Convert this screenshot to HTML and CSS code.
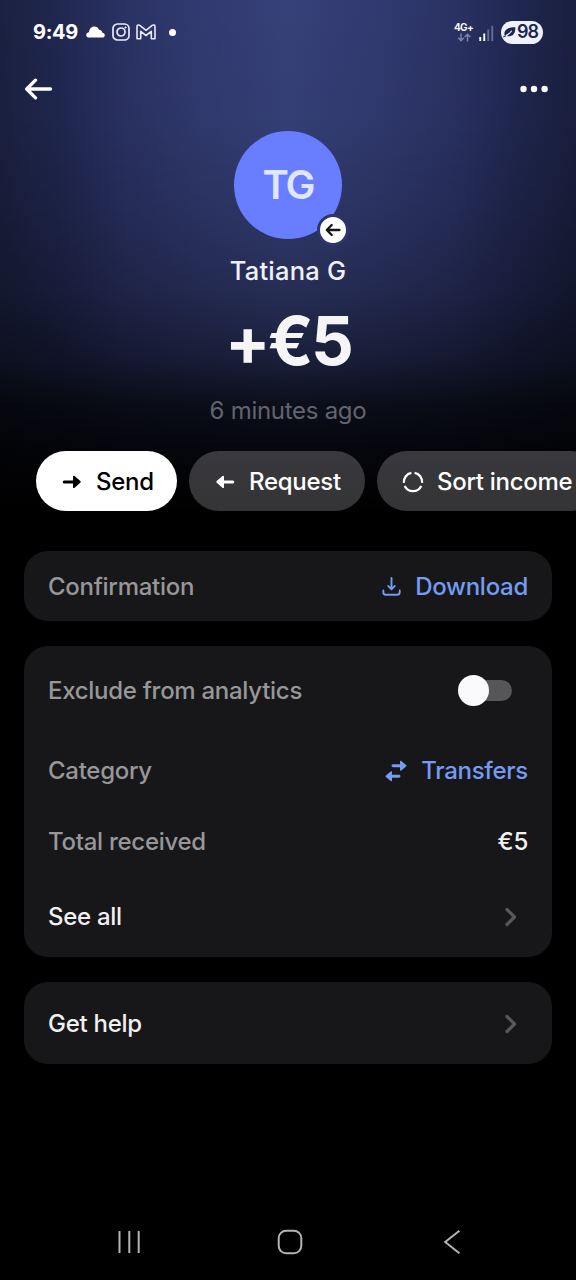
FILE: index.html
```html
<!DOCTYPE html>
<html lang="en">
<head>
<meta charset="utf-8">
<title>Transaction details</title>
<link rel="stylesheet" href="styles.css">
</head>
<body>
<div class="screen">
  <div class="status">
    <div class="status-left">
      <span class="clock">9:49</span>
      <svg class="cloud" width="19" height="12" viewBox="0 0 19 12"><path d="M3.2 11.6C1.3 11.6.2 10.5.2 9c0-1.700 1.300-2.700 2.800-2.800C3.300 2.800 5.500.6 8.200.6c2.300 0 4 1.200 4.800 3.200 2 .1 3.100 1.300 3.300 3 1.500.1 2.500 1.100 2.500 2.400 0 1.500-1.100 2.400-2.700 2.400z" fill="#fff"/></svg>
      <svg class="insta" width="18" height="18" viewBox="0 0 18 18" fill="none" stroke="#e6eaff" stroke-width="1.700"><rect x="1" y="1" width="16" height="16" rx="4.500"/><circle cx="9" cy="9" r="4"/><circle cx="13.500" cy="4.500" r=".8" fill="#e6eaff" stroke-width=".6"/></svg>
      <svg class="gmail" width="20" height="16" viewBox="0 0 20 16" fill="none" stroke="#e6eaff" stroke-width="1.600" stroke-linejoin="round"><path d="M1 14.800V2.600C1 1 2.600.5 3.800 1.400L10 6.300l6.200-4.900C17.400.5 19 1 19 2.600v12.200h-3.700V7.300L10 11.500 4.700 7.300v7.500z"/></svg>
      <span class="dot"></span>
    </div>
    <div class="status-right">
      <div class="network">
        <span class="network-label">4G+</span>
        <svg width="14" height="9" viewBox="0 0 14 9" fill="none" stroke="#7a80a8" stroke-width="1.500"><path d="M4 .5v7M1.200 4.800 4 7.600l2.800-2.800M10.500 8.500V1.300M7.700 4l2.800-2.800L13.300 4"/></svg>
      </div>
      <svg class="signal" width="15" height="16" viewBox="0 0 15 16"><path d="M.3 12h1.900v4H.3z" fill="#fff"/><path d="M4.300 8.500h1.900V16H4.300z" fill="#fff"/><path d="M8.300 4.500h1.900V16H8.300zM12.300 1h1.900v15h-1.900z" fill="#646b97"/></svg>
      <div class="battery">
        <svg width="13" height="12" viewBox="0 0 13 12"><path d="M1.500 9.500C.7 5 3.500 1.200 12.300 1.300c.3 5.700-2.300 9.200-7.200 9-1.100 0-2-.3-2.700-.8" fill="#1d2550"/><path d="M.3 10.800C3.500 9.800 6.500 8.200 8.700 4.800" fill="none" stroke="#eef1ff" stroke-width="1.100"/><path d="M.2 11 3 9.700" stroke="#1d2550" stroke-width="1.200"/></svg>
        <span>98</span>
      </div>
    </div>
  </div>

  <div class="toolbar">
    <svg width="28" height="22" viewBox="0 0 28 22" fill="none" stroke="#fff" stroke-width="3.300" stroke-linecap="round" stroke-linejoin="round"><path d="M25.500 11H3M10.500 2.200 1.700 11l8.800 8.800"/></svg>
    <svg width="28" height="8" viewBox="0 0 28 8" fill="#fff"><circle cx="3.500" cy="4" r="3.200"/><circle cx="14" cy="4" r="3.200"/><circle cx="24.600" cy="4" r="3.200"/></svg>
  </div>

  <div class="hero">
    <div class="avatar">
      <span>TG</span>
      <div class="badge"><svg width="16" height="14" viewBox="0 0 16 14" fill="none" stroke="#151515" stroke-width="2.300" stroke-linecap="round" stroke-linejoin="round"><path d="M14.500 7H2M6.700 2 1.800 7l4.900 5"/></svg></div>
    </div>
    <div class="name">Tatiana G</div>
    <div class="amount">+€5</div>
    <div class="time">6 minutes ago</div>
  </div>

  <div class="actions">
    <div class="pill pill-primary">
      <svg width="20" height="14" viewBox="0 0 20 14"><path d="M2.200 7H12" stroke="#000" stroke-width="3" stroke-linecap="round"/><path d="M11 1.700c0-1 .9-1.200 1.600-.6l5.700 5c.6.5.6 1.200 0 1.700l-5.700 5c-.7.600-1.600.3-1.600-.6z"/></svg>
      <span>Send</span>
    </div>
    <div class="pill pill-request">
      <svg width="20" height="14" viewBox="0 0 20 14" fill="#fff"><path d="M8 7h9.800" stroke="#fff" stroke-width="3" stroke-linecap="round"/><path d="M9 1.700c0-1-.9-1.200-1.600-.6l-5.700 5c-.6.5-.6 1.200 0 1.700l5.700 5c.7.600 1.600.3 1.600-.6z"/></svg>
      <span>Request</span>
    </div>
    <div class="pill pill-sort">
      <svg width="22" height="22" viewBox="0 0 22 22" fill="none" stroke="#fff" stroke-width="2.300"><path d="M12.600 1.940A9.200 9.200 0 0 1 20.150 11.960M19.270 15.030A9.200 9.200 0 0 1 2.730 15.030M1.850 11.960A9.200 9.200 0 0 1 9.400 1.940"/></svg>
      <span>Sort income</span>
    </div>
  </div>

  <div class="card card-confirm">
    <div class="row">
      <span class="label">Confirmation</span>
      <span class="link"><svg class="download" width="19" height="19" viewBox="0 0 19 19" fill="none" stroke="#769bf3" stroke-width="1.900" stroke-linecap="round" stroke-linejoin="round"><path d="M9.500 1v11M6.200 8.900l3.300 3.400 3.300-3.400M1.300 13.500v1.800c0 1.400.9 2.400 2.400 2.400h11.600c1.500 0 2.400-1 2.400-2.400v-1.800"/></svg><span>Download</span></span>
    </div>
  </div>

  <div class="card card-details">
    <div class="row row-exclude">
      <span class="label">Exclude from analytics</span>
      <div class="switch"><span class="knob"></span></div>
    </div>
    <div class="row row-category">
      <span class="label">Category</span>
      <span class="link"><svg width="22" height="22" viewBox="0 0 22 22" fill="#769bf3"><path d="M8 5.800h8M14 16.200H6" stroke="#769bf3" stroke-width="2.900" stroke-linecap="round"/><path d="M15 1.500c0-.8.700-1 1.300-.5l4.800 4.100c.5.400.5 1 0 1.400l-4.800 4.100c-.6.500-1.300.3-1.300-.5zM7 11.900c0-.8-.7-1-1.300-.5L.9 15.500c-.5.400-.5 1 0 1.400L5.700 21c.6.500 1.300.3 1.300-.5z"/></svg><span>Transfers</span></span>
    </div>
    <div class="row row-total">
      <span class="label">Total received</span>
      <span class="value">€5</span>
    </div>
    <div class="row row-all">
      <span class="strong">See all</span>
      <svg class="chevron" width="12" height="20" viewBox="0 0 12 20"><path d="m2 2.500 7.500 7.500L2 17.500" fill="none" stroke="#58585a" stroke-width="3.200" stroke-linecap="round" stroke-linejoin="round"/></svg>
    </div>
  </div>

  <div class="card card-help">
    <div class="row">
      <span class="strong">Get help</span>
      <svg class="chevron" width="12" height="20" viewBox="0 0 12 20"><path d="m2 2.500 7.500 7.500L2 17.500" fill="none" stroke="#58585a" stroke-width="3.200" stroke-linecap="round" stroke-linejoin="round"/></svg>
    </div>
  </div>

  <div class="navbar">
    <svg width="24" height="24" viewBox="0 0 24 24" stroke="#b4b4b4" stroke-width="2"><path d="M2.500 1v22M12.300 1v22M21.700 1v22"/></svg>
    <svg class="home" width="26" height="26" viewBox="0 0 26 26" fill="none" stroke="#b4b4b4" stroke-width="2"><rect x="1.700" y="1.700" width="22.600" height="22.600" rx="7.500"/></svg>
    <svg width="18" height="26" viewBox="0 0 18 26" fill="none" stroke="#b4b4b4" stroke-width="2"><path d="M16.400 1.800 2.200 13l14.200 11.300"/></svg>
  </div>
</div>
</body>
</html>
```
FILE: styles.css
```css
* { box-sizing: border-box; }

body {
  margin: 0;
  background: #000;
}

svg { display: block; flex: none; }

.screen {
  width: 576px;
  height: 1280px;
  overflow: hidden;
  display: flex;
  flex-direction: column;
  font-family: Inter, "Liberation Sans", sans-serif;
  font-size: 24px;
  font-weight: 500;
  line-height: 30px;
  letter-spacing: -0.280px;
  white-space: nowrap;
  color: #f5f5f5;
  background:
    linear-gradient(to bottom, rgba(0,0,0,0) 0, rgba(0,0,0,0.04) 120px, rgba(0,0,0,0.15) 210px, rgba(0,0,0,0.29) 290px, rgba(0,0,0,0.52) 360px, rgba(0,0,0,0.78) 405px, rgba(0,0,0,0.9) 450px, #000 515px),
    linear-gradient(to right, #1a2140 0, #202750 60px, #2a3264 125px, #313a70 200px, #364179 288px, #313a70 376px, #2a3264 451px, #202750 516px, #191f3e 576px);
}

/* System status bar */
.status {
  height: 64px;
  padding: 0 33px 0 32px;
  display: flex;
  align-items: center;
  justify-content: space-between;
}

.status-left, .status-right { display: flex; align-items: center; }

.clock {
  width: 45px;
  margin-right: 9px;
  padding-left: 1px;
  font-size: 20px;
  font-weight: 700;
  letter-spacing: -0.300px;
  color: #fff;
}

.insta { margin-left: 7px; }
.gmail { margin-left: 6px; }

.dot {
  width: 7px;
  height: 7px;
  margin-left: 13px;
  border-radius: 50%;
  background: #fff;
}

.network {
  display: flex;
  flex-direction: column;
  align-items: center;
  gap: 1px;
  margin-right: 6px;
}

.network-label { font-size: 10px; font-weight: 700; line-height: 9px; letter-spacing: -0.700px; }
.signal { margin: 1px 7px 0 0; }

.battery {
  width: 42px;
  height: 23px;
  padding-left: 2px;
  display: flex;
  align-items: center;
  gap: 1px;
  border-radius: 12px;
  background: #eef1ff;
  color: #1d2550;
  font-size: 18px;
  font-weight: 600;
  letter-spacing: -0.900px;
}

/* App toolbar */
.toolbar {
  height: 50px;
  padding: 0 28px 0 25px;
  display: flex;
  align-items: center;
  justify-content: space-between;
}

/* Transaction summary */
.hero {
  height: 337px;
  padding-top: 16.500px;
  display: flex;
  flex-direction: column;
  align-items: center;
}

.avatar {
  position: relative;
  width: 108px;
  height: 108px;
  display: flex;
  align-items: center;
  justify-content: center;
  border-radius: 50%;
  background: #687dff;
  color: #dfe6ff;
  font-size: 40px;
  font-weight: 600;
  letter-spacing: -2px;
}

.badge {
  position: absolute;
  right: -7px;
  bottom: -7px;
  width: 32px;
  height: 32px;
  display: flex;
  align-items: center;
  justify-content: center;
  border: 3px solid #2d356a;
  border-radius: 50%;
  background: #fff;
}

.name { margin-top: 17.500px; font-size: 25.500px; letter-spacing: 0.200px; color: #eff1fa; }

.amount {
  margin-top: 16px;
  font-size: 67px;
  line-height: 78px;
  font-weight: 700;
  letter-spacing: -2.700px;
}

.time { margin-top: 16px; font-weight: 400; color: #62646f; }

/* Quick actions */
.actions {
  display: flex;
  gap: 12px;
  padding-left: 36px;
}

.pill {
  flex: none;
  height: 60px;
  padding: 2px 0 0 26px;
  display: flex;
  align-items: center;
  gap: 14px;
  border-radius: 30px;
  background: linear-gradient(#39393e, #343435);
  color: #fff;
}

.pill-primary { width: 141px; background: #fff; color: #000; }
.pill-request { width: 176px; }
.pill-sort { width: 224px; padding-left: 25px; gap: 13px; }

/* Cards */
.card {
  margin: 0 24px;
  border-radius: 24px;
  background: #171719;
}

.row {
  padding: 0 24px;
  height: 70px;
  display: flex;
  align-items: center;
  justify-content: space-between;
}

.card-confirm { margin-top: 39.500px; height: 70px; }
.card-confirm .row { height: 72px; }
.card-details { margin-top: 25px; height: 311px; padding-top: 5px; }
.card-help { margin-top: 25px; height: 82px; }
.card-help .row { height: 84px; }

.row-exclude { height: 80px; }
.row-category { height: 80px; }
.row-total { height: 62px; }
.row-all { height: 88px; }

.label { color: #97979a; }
.link { display: flex; align-items: center; gap: 14px; color: #769bf3; }
.value { color: #f2f2f2; }
.strong { color: #f0f0f0; }
.chevron { margin-right: 11px; }

.switch {
  width: 50px;
  height: 21px;
  margin-right: 16px;
  display: flex;
  align-items: center;
  border-radius: 11px;
  background: #565658;
}

.knob {
  width: 31px;
  height: 31px;
  margin-left: -4px;
  border-radius: 50%;
  background: #fafafc;
}

/* System navigation */
.navbar {
  margin-top: 140.500px;
  height: 76px;
  padding: 0 115px 0 117px;
  display: flex;
  align-items: center;
  justify-content: space-between;
}

.home { margin-right: 4px; }
```
